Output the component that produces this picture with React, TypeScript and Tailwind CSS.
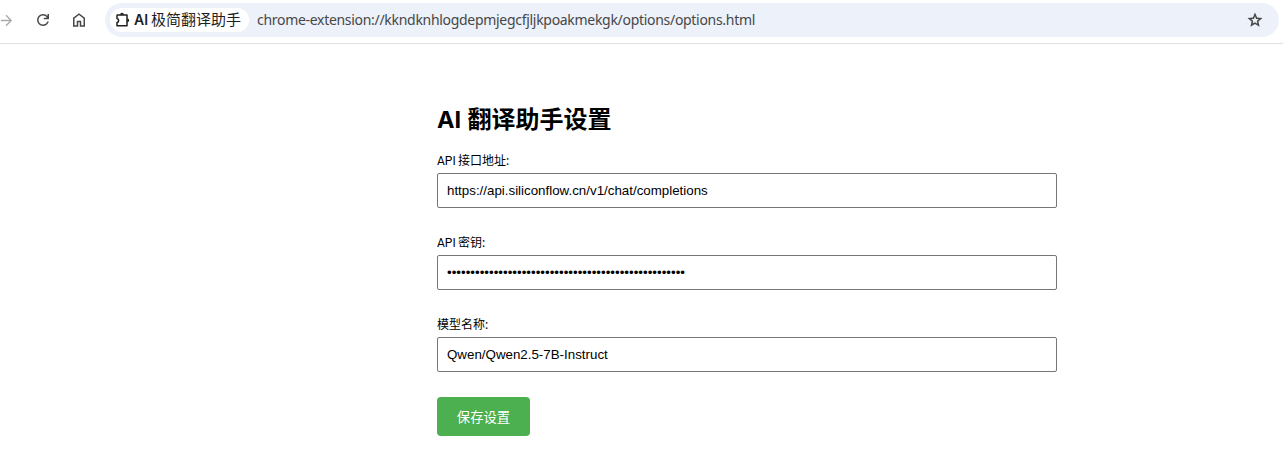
import React from 'react';

const iconProps = { viewBox: '0 -960 960 960', fill: 'currentColor' };

function Toolbar() {
  return (
    <header className="flex h-11 items-start border-b border-[#dfe1e1] bg-white pt-[3px] font-['Noto_Sans','Noto_Sans_CJK_SC',sans-serif] text-[#474747]">
      <div className="flex h-[34px] w-[105px] shrink-0 items-center">
        <svg {...iconProps} className="-ml-[2px] size-[17px] shrink-0 text-[#ababab]">
          <path d="M647-440H160v-80h487L423-744l57-56 320 320-320 320-57-56 224-224Z" />
        </svg>
        <svg {...iconProps} className="ml-[19px] size-[18px] shrink-0">
          <path d="M480-160q-134 0-227-93t-93-227q0-134 93-227t227-93q69 0 132 28.500T720-690v-110h80v280H520v-80h168q-32-56-87.500-88T480-720q-100 0-170 70t-70 170q0 100 70 170t170 70q77 0 139-44t87-116h84q-28 106-114 173t-196 67Z" />
        </svg>
        <svg {...iconProps} className="ml-[18px] size-[18px] shrink-0">
          <path d="M240-200h120v-240h240v240h120v-360L480-740 240-560v360Zm-80 80v-480l320-240 320 240v480H520v-240h-80v240H160Z" />
        </svg>
      </div>
      <div className="mr-1 flex h-[34px] flex-1 items-center rounded-full bg-[#ecf1fa] pl-[5px] pr-[15px]">
        <div className="flex h-6 w-[139px] shrink-0 items-center rounded-full bg-white pl-1 text-[15px] leading-6 text-[#1f1f1f]">
          <svg viewBox="0 0 18 18" className="size-[18px] shrink-0">
            <path
              d="M3.500 4H13V14.700H3V11.500C5.200 11.200 5.200 7.800 3 7.500V4.500Q3 4 3.500 4Z"
              fill="none"
              stroke="currentColor"
              strokeWidth="1.5"
              strokeLinejoin="round"
            />
            <path d="M6.100 3.700a1.900 1.900 0 0 1 3.800 0ZM13.300 7.400a1.900 1.900 0 0 1 0 3.800Z" fill="currentColor" />
          </svg>
          <span className="ml-[2px] w-[17px] shrink-0 font-['Inter',sans-serif] text-[14px] font-semibold">AI</span>
          <span className="-mt-[2px] whitespace-nowrap">极简翻译助手</span>
        </div>
        <span className="ml-2 whitespace-nowrap text-[14px] leading-6 tracking-[-0.3px]">
          chrome-extension://kkndknhlogdepmjegcfjljkpoakmekgk/options/options.html
        </span>
        <svg {...iconProps} className="ml-auto size-[18px] shrink-0">
          <path d="m354-287 126-76 126 77-33-144 111-96-146-13-58-136-58 135-146 13 111 97-33 143ZM233-120l65-281L80-590l288-25 112-265 112 265 288 25-218 189 65 281-247-149-247 149Z" />
        </svg>
      </div>
    </header>
  );
}

function Field({ label, value, type = 'text' }: { label: React.ReactNode; value: string; type?: string }) {
  return (
    <label className="block">
      <span className="mb-1 flex h-[17px] items-baseline whitespace-pre text-[12px] leading-[17px]">{label}</span>
      <input
        type={type}
        defaultValue={value}
        className="block h-[35px] w-full rounded-[2px] border border-[#767676] bg-white px-[9px] font-['Liberation_Sans',sans-serif] text-[13.333px] text-black outline-none"
      />
    </label>
  );
}

function ApiLabel({ children }: { children: string }) {
  return (
    <>
      <span className="w-[21px] font-['Roboto',sans-serif] text-[12px]">API</span>
      <span>{children}</span>
    </>
  );
}

export default function App() {
  return (
    <div className="h-[475px] overflow-hidden bg-white">
      <Toolbar />
      <main className="ml-[437px] w-[620px] pt-[57px] font-['Noto_Sans','Noto_Sans_CJK_SC',sans-serif] text-black">
        <h1 className="mb-4 flex h-[35px] items-baseline whitespace-nowrap text-[24px] leading-[35px] font-bold">
          <span className="w-[30.500px] font-['Inter',sans-serif] text-[23.500px]">AI</span>
          <span>翻译助手设置</span>
        </h1>
        <div className="mb-[25px] flex flex-col gap-[26px]">
          <Field label={<ApiLabel>接口地址:</ApiLabel>} value="https://api.siliconflow.cn/v1/chat/completions" />
          <Field label={<ApiLabel>密钥:</ApiLabel>} value={'x'.repeat(51)} type="password" />
          <Field label="模型名称:" value="Qwen/Qwen2.5-7B-Instruct" />
        </div>
        <button className="h-[39px] w-[93px] rounded-[4px] bg-[#4caf50] pt-px text-[13.333px] leading-[39px] text-white">保存设置</button>
      </main>
    </div>
  );
}
